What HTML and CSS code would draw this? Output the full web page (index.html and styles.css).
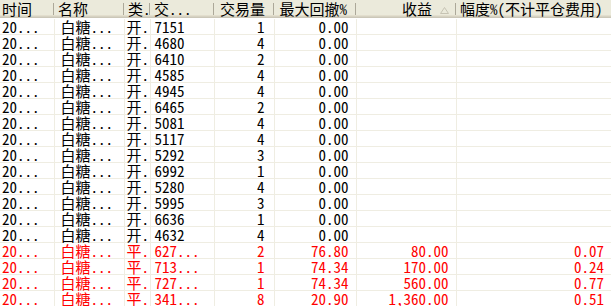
FILE: index.html
```html
<!DOCTYPE html>
<html>
<head>
<meta charset="utf-8">
<link rel="stylesheet" href="styles.css">
</head>
<body>
<table class="grid">
  <colgroup>
    <col class="c1"><col class="c2"><col class="c3"><col class="c4"><col class="c5"><col class="c6"><col class="c7"><col class="c8">
  </colgroup>
  <thead>
    <tr>
      <th class="l first">时间</th>
      <th class="l">名称</th>
      <th class="l">类.</th>
      <th class="l">交...</th>
      <th class="r">交易量</th>
      <th class="r">最大回撤%</th>
      <th class="r sorted">收益<svg class="arrow" width="9" height="7" viewBox="0 0 9 7"><path d="M4.5 0.5 L8.5 6.5 L0.5 6.5 Z" fill="none" stroke="#c6c3b3" stroke-width="1"/></svg></th>
      <th class="l last">幅度%(不计平仓费用)</th>
    </tr>
  </thead>
  <tbody>
    <tr><td>20...</td><td class="nm">白糖...</td><td>开.</td><td class="cd">7151</td><td class="r">1</td><td class="r">0.00</td><td></td><td></td></tr>
    <tr><td>20...</td><td class="nm">白糖...</td><td>开.</td><td class="cd">4680</td><td class="r">4</td><td class="r">0.00</td><td></td><td></td></tr>
    <tr><td>20...</td><td class="nm">白糖...</td><td>开.</td><td class="cd">6410</td><td class="r">2</td><td class="r">0.00</td><td></td><td></td></tr>
    <tr><td>20...</td><td class="nm">白糖...</td><td>开.</td><td class="cd">4585</td><td class="r">4</td><td class="r">0.00</td><td></td><td></td></tr>
    <tr><td>20...</td><td class="nm">白糖...</td><td>开.</td><td class="cd">4945</td><td class="r">4</td><td class="r">0.00</td><td></td><td></td></tr>
    <tr><td>20...</td><td class="nm">白糖...</td><td>开.</td><td class="cd">6465</td><td class="r">2</td><td class="r">0.00</td><td></td><td></td></tr>
    <tr><td>20...</td><td class="nm">白糖...</td><td>开.</td><td class="cd">5081</td><td class="r">4</td><td class="r">0.00</td><td></td><td></td></tr>
    <tr><td>20...</td><td class="nm">白糖...</td><td>开.</td><td class="cd">5117</td><td class="r">4</td><td class="r">0.00</td><td></td><td></td></tr>
    <tr><td>20...</td><td class="nm">白糖...</td><td>开.</td><td class="cd">5292</td><td class="r">3</td><td class="r">0.00</td><td></td><td></td></tr>
    <tr><td>20...</td><td class="nm">白糖...</td><td>开.</td><td class="cd">6992</td><td class="r">1</td><td class="r">0.00</td><td></td><td></td></tr>
    <tr><td>20...</td><td class="nm">白糖...</td><td>开.</td><td class="cd">5280</td><td class="r">4</td><td class="r">0.00</td><td></td><td></td></tr>
    <tr><td>20...</td><td class="nm">白糖...</td><td>开.</td><td class="cd">5995</td><td class="r">3</td><td class="r">0.00</td><td></td><td></td></tr>
    <tr><td>20...</td><td class="nm">白糖...</td><td>开.</td><td class="cd">6636</td><td class="r">1</td><td class="r">0.00</td><td></td><td></td></tr>
    <tr><td>20...</td><td class="nm">白糖...</td><td>开.</td><td class="cd">4632</td><td class="r">4</td><td class="r">0.00</td><td></td><td></td></tr>
    <tr class="red"><td>20...</td><td class="nm">白糖...</td><td>平.</td><td class="cd">627...</td><td class="r">2</td><td class="r">76.80</td><td class="r">80.00</td><td class="r">0.07</td></tr>
    <tr class="red"><td>20...</td><td class="nm">白糖...</td><td>平.</td><td class="cd">713...</td><td class="r">1</td><td class="r">74.34</td><td class="r">170.00</td><td class="r">0.24</td></tr>
    <tr class="red"><td>20...</td><td class="nm">白糖...</td><td>平.</td><td class="cd">727...</td><td class="r">1</td><td class="r">74.34</td><td class="r">560.00</td><td class="r">0.77</td></tr>
    <tr class="red"><td>20...</td><td class="nm">白糖...</td><td>平.</td><td class="cd">341...</td><td class="r">8</td><td class="r">20.90</td><td class="r">1,360.00</td><td class="r">0.51</td></tr>
  </tbody>
</table>
</body>
</html>
```

FILE: styles.css
```css
html, body {
  margin: 0;
  padding: 0;
  background: #ffffff;
  overflow: hidden;
}

.grid {
  border-collapse: collapse;
  table-layout: fixed;
  width: 611px;
  font-family: "Noto Sans Mono CJK SC", "Noto Sans CJK SC", "DejaVu Sans Mono", monospace;
  font-size: 15px;
  color: #000;
}

.c1 { width: 54px; }
.c2 { width: 70px; }
.c3 { width: 26px; }
.c4 { width: 64px; }
.c5 { width: 60px; }
.c6 { width: 82px; }
.c7 { width: 100px; }
.c8 { width: 155px; }

.grid th {
  position: relative;
  height: 19px;
  padding: 0 0 0 4px;
  font-weight: normal;
  white-space: nowrap;
  line-height: 17px;
  vertical-align: top;
  background: linear-gradient(to bottom, #ebeadb 0, #ebeadb 15px, #e2decd 15px, #e2decd 16px, #d6d2c2 16px, #d6d2c2 17px, #cbc7b8 17px, #cbc7b8 18px, #ffffff 18px);
}

.grid th.first { padding-left: 2px; }

.grid th::after {
  content: "";
  position: absolute;
  right: 0;
  top: 3px;
  width: 1px;
  height: 12px;
  background: #aca899;
  box-shadow: 1px 0 0 #ffffff;
}

.grid th.last::after { display: none; }

.grid th.l { text-align: left; }
.grid th.r { text-align: right; padding: 0 9px 0 0; }
.grid th.sorted { padding-right: 7px; }

.arrow {
  display: inline-block;
  margin-left: 8px;
  vertical-align: 1px;
}

.grid td {
  height: 15px;
  padding: 0 0 0 2px;
  border-right: 1px solid #efede2;
  border-bottom: 1px solid #efede2;
  white-space: nowrap;
  line-height: 15px;
}

.grid td:last-child { border-right: none; }

.grid td.nm { padding-left: 6px; }
.grid td.cd { padding-left: 4px; }
.grid td.r { text-align: right; padding: 0 7px 0 0; }
.grid td.r:nth-child(5) { padding-right: 9px; }

.grid tr.red td { color: #ff0000; }
```
